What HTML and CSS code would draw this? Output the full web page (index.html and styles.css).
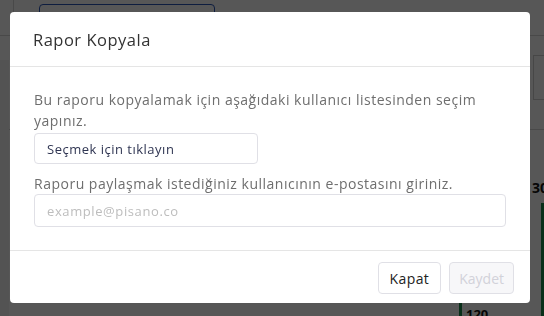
FILE: index.html
```html
<!DOCTYPE html>
<html lang="tr">

  <head>
    <meta charset="UTF-8">
    <meta name="viewport" content="width=device-width, initial-scale=1.0">
    <title>Rapor Kopyala</title>
    <link rel="stylesheet" href="styles.css">
  </head>

  <body>
    <div class="page">
      <div class="topbar">
        <div class="side-tab"></div>
        <div class="outline-btn"></div>
      </div>
      <div class="content">
        <div class="sidebar"></div>
        <div class="main">
          <div class="filter-row">
            <div class="filter-box"></div>
          </div>
          <div class="chart">
            <div class="chart-top">30</div>
            <div class="bars">
              <div class="bar"><span>120</span></div>
              <div class="bar"></div>
            </div>
          </div>
        </div>
      </div>
    </div>

    <div class="overlay">
      <div class="modal">
        <div class="modal-header">
          <h2>Rapor Kopyala</h2>
        </div>
        <div class="modal-body">
          <p class="hint">Bu raporu kopyalamak için aşağıdaki kullanıcı listesinden seçim yapınız.</p>
          <div class="select-box">Seçmek için tıklayın</div>
          <p class="hint second">Raporu paylaşmak istediğiniz kullanıcının e-postasını giriniz.</p>
          <input class="email-input" type="text" placeholder="example@pisano.co">
        </div>
        <div class="modal-footer">
          <button class="btn">Kapat</button>
          <button class="btn disabled" disabled>Kaydet</button>
        </div>
      </div>
    </div>
  </body>

</html>
```

FILE: styles.css
```css
body {
  margin: 0;
  font-family: "Open Sans", "Noto Sans", sans-serif;
  background-color: #ffffff;
  height: 316px;
  overflow: hidden;
}

/* page behind the dialog */
.page {
  display: flex;
  flex-direction: column;
  height: 316px;
}

.topbar {
  display: flex;
  align-items: flex-start;
  gap: 25px;
  height: 35px;
  border-bottom: 1px solid #d6d6d6;
}

.side-tab {
  width: 13px;
  height: 35px;
  border-right: 1px solid #d6d6d6;
}

.outline-btn {
  margin-top: 4px;
  width: 176px;
  height: 36px;
  box-sizing: border-box;
  border: 1px solid #2a55b8;
  border-radius: 4px;
  background: #ffffff;
}

.content {
  flex: 1;
  display: flex;
}

.sidebar {
  width: 9px;
  margin-top: 24px;
  background: #f2f2f2;
}

.main {
  flex: 1;
  display: flex;
  flex-direction: column;
  align-items: flex-end;
}

.filter-row {
  width: 100%;
  height: 94px;
  border-bottom: 1px solid #d6d6d6;
  display: flex;
  justify-content: flex-end;
  padding-top: 19px;
  box-sizing: border-box;
}

.filter-box {
  width: 10px;
  height: 43px;
  border: 1px solid #cfcfcf;
  border-right: none;
}

.chart {
  width: 85px;
  padding-top: 48px;
}

.chart-top {
  font-weight: bold;
  font-size: 14px;
  color: #111;
  text-align: right;
  margin-right: -4px;
}

.bars {
  display: flex;
  justify-content: space-between;
  margin-top: 6px;
  height: 120px;
}

.bar {
  width: 3px;
  background: #1b8a4a;
}

.bar span {
  display: block;
  margin: 102px 0 0 7px;
  font-size: 13px;
  font-weight: bold;
  color: #111;
}

/* dialog */
.overlay {
  position: fixed;
  inset: 0;
  background-color: rgba(0, 0, 0, 0.66);
  padding: 12px 0 0 10px;
}

.modal {
  width: 520px;
  background: #ffffff;
  border-radius: 4px;
}

.modal-header {
  height: 54px;
  display: flex;
  align-items: center;
  padding: 0 23px;
  border-bottom: 1px solid #e5e5e5;
}

.modal-header h2 {
  margin: 0;
  font-size: 16.5px;
  font-weight: 400;
  letter-spacing: 0.5px;
  color: #333333;
}

.modal-body {
  padding: 22px 24px 23px 24px;
}

.hint {
  margin: 0;
  font-size: 14px;
  line-height: 21px;
  letter-spacing: 0.5px;
  color: #6e6e6e;
}

.hint.second {
  margin-top: 9px;
}

.select-box {
  margin-top: 2px;
  width: 224px;
  height: 31px;
  box-sizing: border-box;
  border: 1px solid #e0e0e6;
  border-radius: 4px;
  padding: 0 12px;
  display: flex;
  align-items: center;
  font-size: 13px;
  letter-spacing: 0.5px;
  color: #2f3552;
}

.email-input {
  display: block;
  width: 472px;
  height: 33px;
  box-sizing: border-box;
  border: 1px solid #e0e0e6;
  border-radius: 4px;
  padding: 0 12px;
  font-family: inherit;
  font-size: 13px;
  letter-spacing: 0.6px;
  color: #333;
  outline: none;
}

.email-input::placeholder {
  color: #bdbdbd;
}

.modal-footer {
  display: flex;
  justify-content: flex-end;
  gap: 8px;
  padding: 11px 16px 9px;
  border-top: 1px solid #e5e5e5;
}

.btn {
  height: 32px;
  padding: 0 11px;
  border: 1px solid #e0e0e6;
  border-radius: 4px;
  background: #ffffff;
  font-family: inherit;
  font-size: 14px;
  letter-spacing: 0.4px;
  color: #222;
  cursor: pointer;
}

.btn.disabled {
  padding: 0 9px;
  letter-spacing: 0;
  background: #f7f7f9;
  color: #d2d2da;
  cursor: default;
}
```
